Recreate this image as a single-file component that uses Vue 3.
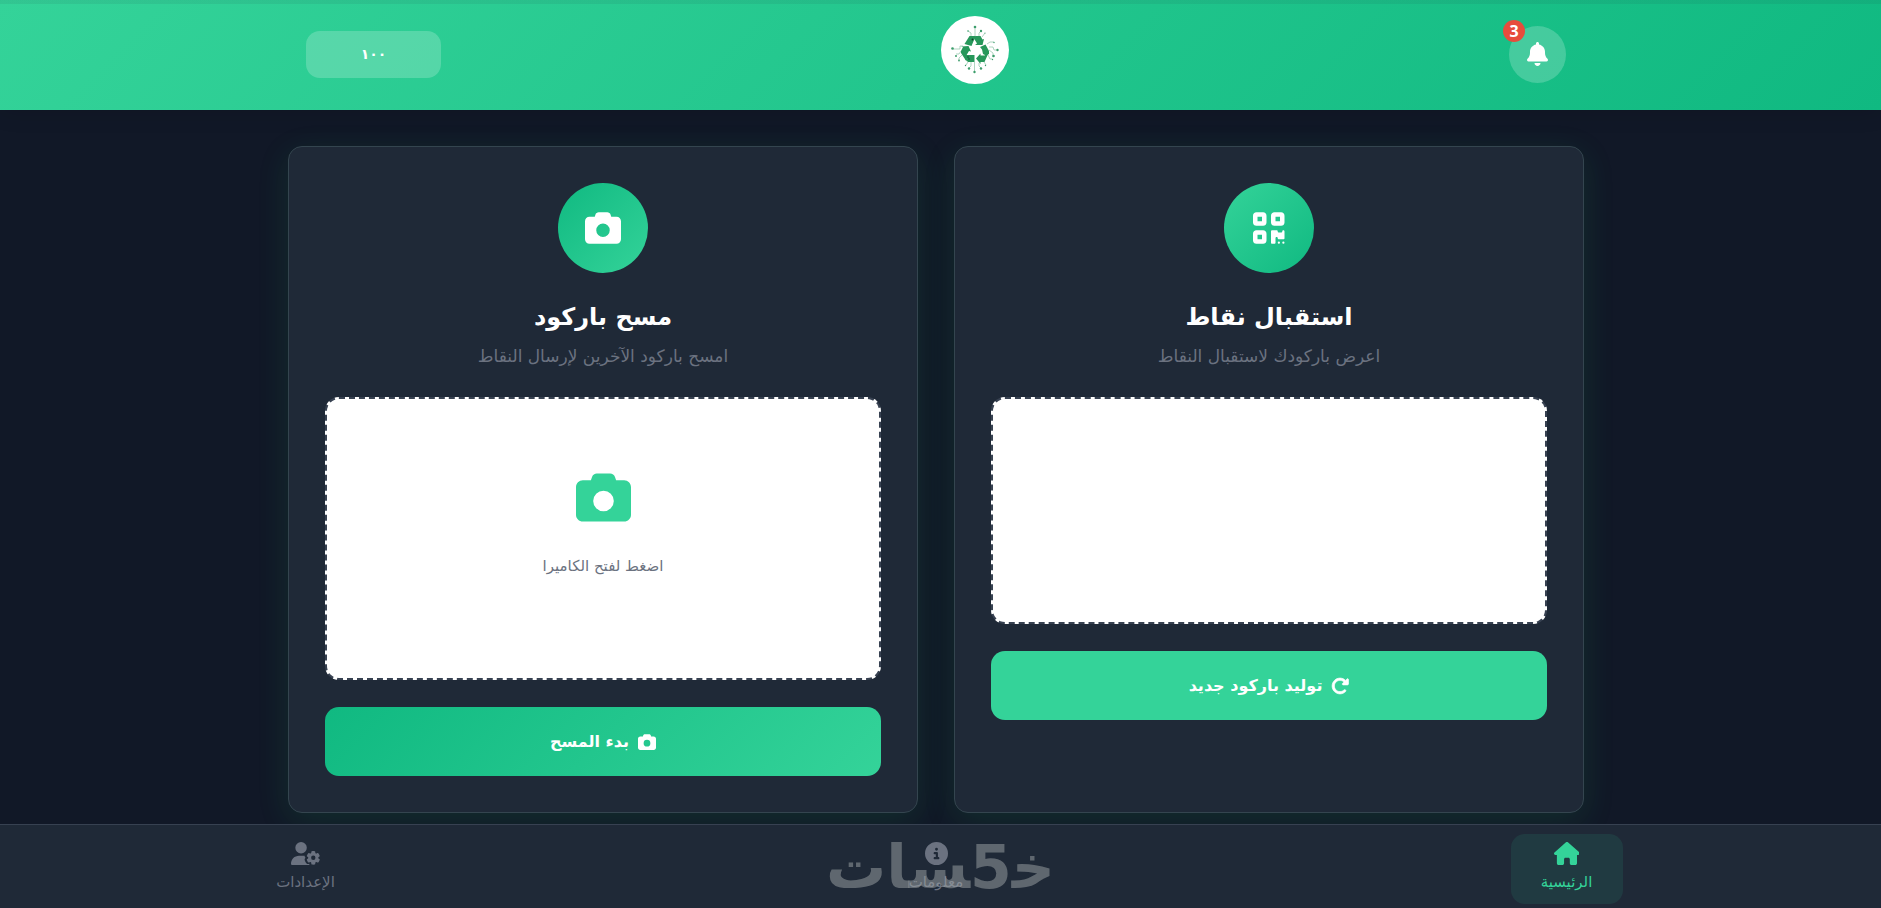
<script setup>
import { ref } from 'vue';

const points = ref('١٠٠');
const notifications = ref(3);
const activeTab = ref('home');

const CAMERA = 'M149.1 64.8L138.7 96H64C28.7 96 0 124.7 0 160V416c0 35.3 28.7 64 64 64H448c35.3 0 64-28.7 64-64V160c0-35.3-28.7-64-64-64H373.3L362.9 64.8C356.4 45.2 338.1 32 317.4 32H194.6c-20.7 0-39 13.2-45.5 32.8zM256 192a96 96 0 1 1 0 192 96 96 0 1 1 0-192z';

const tabs = [
  {
    id: 'home',
    label: 'الرئيسية',
    viewBox: '0 0 576 512',
    paths: ['M575.8 255.5c0 18-15 32.1-32 32.1h-32l.7 160.2c0 2.7-.2 5.4-.5 8.1V472c0 22.1-17.9 40-40 40H456c-1.1 0-2.2 0-3.3-.1c-1.4 .1-2.8 .1-4.2 .1H416 392c-22.1 0-40-17.9-40-40V448 384c0-17.7-14.3-32-32-32H256c-17.7 0-32 14.3-32 32v64 24c0 22.1-17.9 40-40 40H160 128.1c-1.5 0-3-.1-4.5-.2c-1.2 .1-2.4 .2-3.6 .2H104c-22.1 0-40-17.9-40-40V360c0-.9 0-1.9 .1-2.8V287.6H32c-18 0-32-14-32-32.1c0-9 3-17 10-24L266.4 8c7-7 15-8 22-8s15 2 21 7L564.8 231.5c8 7 12 15 11 24z'],
  },
  {
    id: 'info',
    label: 'معلومات',
    viewBox: '0 0 512 512',
    paths: ['M256 512A256 256 0 1 0 256 0a256 256 0 1 0 0 512zM216 336h24V272H216c-13.3 0-24-10.7-24-24s10.7-24 24-24h48c13.3 0 24 10.7 24 24v88h8c13.3 0 24 10.7 24 24s-10.7 24-24 24H216c-13.3 0-24-10.7-24-24s10.7-24 24-24zm40-208a32 32 0 1 1 0 64 32 32 0 1 1 0-64z'],
  },
  {
    id: 'settings',
    label: 'الإعدادات',
    viewBox: '0 0 640 512',
    paths: [
      'M224 0a128 128 0 1 1 0 256A128 128 0 1 1 224 0zM178.3 304h91.4c11.8 0 23.4 1.2 34.5 3.3c-2.1 18.5 7.4 35.6 21.8 44.8c-16.6 10.6-26.7 31.6-20 53.3c4 12.9 9.4 25.5 16.4 37.6s15.2 23.1 24.4 33c15.7 16.9 39.6 18.4 57.2 8.7v.9c0 9.2 2.7 18.5 7.9 26.3H29.7C13.3 512 0 498.7 0 482.3C0 383.8 79.8 304 178.3 304z',
      'M452 218.2c0-7 4.5-13.3 11.3-14.8c10.5-2.4 21.5-3.7 32.7-3.7s22.2 1.3 32.7 3.7c6.8 1.5 11.3 7.8 11.3 14.8v17.7c0 7.8 4.8 14.8 11.6 18.7c6.8 3.9 15.1 4.5 21.8 .6l13.8-7.9c6.1-3.5 13.7-2.7 18.5 2.4c7.6 8.1 14.3 17.2 20.1 27.2s10.3 20.4 13.5 31c2.1 6.7-1.1 13.7-7.2 17.2l-14.4 8.3c-6.5 3.7-10 10.9-10 18.4s3.5 14.7 10 18.4l14.4 8.3c6.1 3.5 9.2 10.5 7.2 17.2c-3.3 10.6-7.8 21-13.5 31s-12.5 19.1-20.1 27.2c-4.8 5.1-12.5 5.9-18.5 2.4l-13.8-7.9c-6.7-3.9-15.1-3.3-21.8 .6c-6.8 3.9-11.6 10.9-11.6 18.7v17.7c0 7-4.5 13.3-11.3 14.8c-10.5 2.4-21.5 3.7-32.7 3.7s-22.2-1.3-32.7-3.7c-6.8-1.5-11.3-7.8-11.3-14.8V467.8c0-7.9-4.9-14.9-11.7-18.9c-6.8-3.9-15.2-4.5-22-.6l-13.5 7.8c-6.1 3.5-13.7 2.7-18.5-2.4c-7.6-8.1-14.3-17.2-20.1-27.2s-10.3-20.4-13.5-31c-2.1-6.7 1.1-13.7 7.2-17.2l14-8.1c6.5-3.8 10.1-11.1 10.1-18.6s-3.5-14.8-10.1-18.6l-14-8.1c-6.1-3.5-9.2-10.5-7.2-17.2c3.3-10.6 7.7-21 13.5-31s12.5-19.1 20.1-27.2c4.8-5.1 12.4-5.9 18.5-2.4l13.6 7.8c6.8 3.9 15.2 3.3 22-.6c6.9-3.9 11.7-11 11.7-18.9V218.2zm92.1 133.5a48.1 48.1 0 1 0 -96.1 0 48.1 48.1 0 1 0 96.1 0z',
    ],
  },
];

// circuit traces round the recycling mark: path + end node [x, y, r]
const traces = [
  { d: 'M34 20V11', node: [34, 11, 1.3] },
  { d: 'M38 20V17L40 15', node: [40, 15, 1.2] },
  { d: 'M30 20V17L27 15', node: [27, 15, 0.8] },
  { d: 'M41 21L44 17', node: [44, 17, 0.6] },
  { d: 'M22 30H19V33H12', node: [11.5, 32.5, 1.3] },
  { d: 'M20 35L18 38H15', node: [15, 40, 1] },
  { d: 'M21 39L18 42V44', node: [18, 44.5, 0.9] },
  { d: 'M46 28L49 26H53', node: [53, 26.5, 0.7] },
  { d: 'M48 31H52L53 34H56', node: [56.5, 34, 1.2] },
  { d: 'M48 34L52 37V39', node: [52.5, 40, 1.3] },
  { d: 'M47 39L49 43H51', node: [51.5, 43.5, 0.7] },
  { d: 'M43 46L45 49', node: [44.5, 49.5, 0.7] },
  { d: 'M38 47V50L40 52', node: [40, 52.5, 1.2] },
  { d: 'M33.5 46V56', node: [33.5, 56, 1.2] },
  { d: 'M30 46V50L28 52', node: [28, 52.5, 1.2] },
  { d: 'M27 46L25 49', node: [24.5, 49.5, 0.7] },
];
</script>

<template>
  <div class="page" dir="rtl" lang="ar">
    <header class="header">
      <div class="header-content">
        <button class="bell" type="button" aria-label="الإشعارات">
          <svg viewBox="0 0 448 512" class="bell-icon">
            <path d="M224 0c-17.7 0-32 14.3-32 32V51.2C119 66 64 130.6 64 208v18.8c0 47-17.3 92.4-48.5 127.6l-7.4 8.3c-8.4 9.4-10.4 22.9-5.3 34.4S19.4 416 32 416H416c12.6 0 24-7.4 29.2-18.9s3.1-25-5.3-34.4l-7.4-8.3C401.3 319.2 384 273.9 384 226.8V208c0-77.4-55-142-128-156.8V32c0-17.7-14.3-32-32-32zm45.3 493.3c12-12 18.7-28.3 18.7-45.3H224 160c0 17 6.7 33.3 18.7 45.3s28.3 18.7 45.3 18.7s33.3-6.7 45.3-18.7z" />
          </svg>
          <span class="badge">{{ notifications }}</span>
        </button>

        <svg class="logo" viewBox="0 0 68 68">
          <circle cx="34" cy="34" r="34" fill="#fff" />
          <g fill="none" stroke="#8cc3a6" stroke-width="0.7">
            <path v-for="(t, i) in traces" :key="i" :d="t.d" />
          </g>
          <g fill="#3c9d6b">
            <circle v-for="(t, i) in traces" :key="i" :cx="t.node[0]" :cy="t.node[1]" :r="t.node[2]" />
          </g>
          <g fill="#27975a">
            <path d="M23.5 28L28.5 20H35L33 24L30.500 30Z" />
            <path d="M34.5 20H39.5L41.5 23.5L43 23L41.5 29H34L36 27.5L33 22.5Z" />
            <path d="M20 35L22 31L20 30.5L27.5 30L30 35.5L28 35L25 40L25.5 45.5L20 37Z" />
            <path d="M25 39H33.5V46H27L24 43Z" />
            <path d="M35 42.5L39.5 37.5V39.5H43.5L47.5 37L43.5 46H39.5V48Z" />
            <path d="M39 31L44.5 28.5L48 35V38L45 39.5L42 38L41 33.5Z" />
          </g>
          <g fill="#123c2c">
            <circle cx="31.5" cy="23.5" r="0.9" />
            <circle cx="27" cy="41" r="0.7" />
            <circle cx="28" cy="43" r="0.7" />
          </g>
        </svg>

        <div class="points">{{ points }}</div>
      </div>
    </header>

    <main class="main">
      <section class="card">
        <div class="card-icon">
          <svg viewBox="0 0 448 512" class="icon-lg">
            <path d="M0 80C0 53.5 21.5 32 48 32h96c26.5 0 48 21.5 48 48v96c0 26.5-21.5 48-48 48H48c-26.5 0-48-21.5-48-48V80zM64 96v64h64V96H64zM0 336c0-26.5 21.5-48 48-48h96c26.5 0 48 21.5 48 48v96c0 26.5-21.5 48-48 48H48c-26.5 0-48-21.5-48-48V336zm64 16v64h64V352H64zM304 32h96c26.5 0 48 21.5 48 48v96c0 26.5-21.5 48-48 48H304c-26.5 0-48-21.5-48-48V80c0-26.5 21.5-48 48-48zm80 64H320v64h64V96zM256 304c0-8.8 7.2-16 16-16h64c8.8 0 16 7.2 16 16s7.2 16 16 16h32c8.8 0 16-7.2 16-16s7.2-16 16-16s16 7.2 16 16v96c0 8.8-7.2 16-16 16H368c-8.8 0-16-7.2-16-16s-7.2-16-16-16s-16 7.2-16 16v64c0 8.8-7.2 16-16 16H272c-8.8 0-16-7.2-16-16V304zM368 480a16 16 0 1 1 0-32 16 16 0 1 1 0 32zm64 0a16 16 0 1 1 0-32 16 16 0 1 1 0 32z" />
          </svg>
        </div>
        <h2 class="card-title">استقبال نقاط</h2>
        <p class="card-text">اعرض باركودك لاستقبال النقاط</p>
        <div class="code-box"></div>
        <button class="btn btn-solid" type="button">
          <svg viewBox="0 0 512 512" class="icon-sm icon-redo">
            <path d="M463.5 224H472c13.3 0 24-10.7 24-24V72c0-9.7-5.8-18.5-14.8-22.2s-19.3-1.7-26.2 5.2L413.4 96.6c-87.6-86.5-228.7-86.2-315.8 1c-87.5 87.5-87.5 229.3 0 316.8s229.3 87.5 316.8 0c12.5-12.5 12.5-32.8 0-45.3s-32.8-12.5-45.3 0c-62.5 62.5-163.8 62.5-226.3 0s-62.5-163.8 0-226.3c62.2-62.2 162.7-62.5 225.3-1L327 183c-6.9 6.9-8.9 17.2-5.2 26.2s12.5 14.8 22.2 14.8H463.5z" />
          </svg>
          توليد باركود جديد
        </button>
      </section>

      <section class="card">
        <div class="card-icon reverse">
          <svg viewBox="0 0 512 512" class="icon-lg"><path :d="CAMERA" /></svg>
        </div>
        <h2 class="card-title">مسح باركود</h2>
        <p class="card-text">امسح باركود الآخرين لإرسال النقاط</p>
        <button class="code-box scanner" type="button">
          <svg viewBox="0 0 512 512" class="icon-xl"><path :d="CAMERA" /></svg>
          <span>اضغط لفتح الكاميرا</span>
        </button>
        <button class="btn btn-gradient" type="button">
          <svg viewBox="0 0 512 512" class="icon-sm"><path :d="CAMERA" /></svg>
          بدء المسح
        </button>
      </section>
    </main>

    <nav class="nav">
      <div class="nav-content">
        <a v-for="tab in tabs" :key="tab.id" href="#" :class="['nav-item', activeTab === tab.id ? 'active' : '']"
          @click.prevent="activeTab = tab.id">
          <svg :viewBox="tab.viewBox" class="nav-icon">
            <path v-for="(d, i) in tab.paths" :key="i" :d="d" />
          </svg>
          <span>{{ tab.label }}</span>
        </a>
      </div>
      <div class="watermark"><span>خ&zwj;</span><span>5</span><span>&zwj;سات</span></div>
    </nav>
  </div>
</template>

<style>
body {
  margin: 0;
  background: #111827;
}
</style>

<style scoped>
.page {
  min-height: 100vh;
  display: grid;
  grid-template-rows: auto 1fr auto;
  background: #111827;
  color: #fff;
  font-family: "DejaVu Sans", sans-serif;
}

.page * {
  box-sizing: border-box;
}

svg {
  display: block;
  fill: currentColor;
}

button {
  font-family: inherit;
  border: none;
  cursor: pointer;
}

.header {
  padding: 16px 9px 17px 0;
  background: linear-gradient(to bottom, rgba(31, 41, 55, 0.08) 4px, transparent 4px),
    linear-gradient(135deg, #34d399 0%, #10b981 100%);
  box-shadow: 0 4px 20px rgba(0, 0, 0, 0.1);
}

.header-content {
  max-width: 1260px;
  margin: 0 auto;
  display: flex;
  align-items: center;
  justify-content: space-between;
}

.bell {
  position: relative;
  width: 57px;
  height: 57px;
  padding: 0 0 2px;
  border-radius: 50%;
  background: rgba(255, 255, 255, 0.2);
  color: #fff;
  display: flex;
  align-items: center;
  justify-content: center;
}

.bell-icon {
  height: 24px;
}

.badge {
  position: absolute;
  top: -6px;
  left: -6px;
  width: 22px;
  height: 22px;
  border-radius: 50%;
  background: #e74c3c;
  font: bold 16px/22px "Open Sans", sans-serif;
  text-align: center;
}

.logo {
  width: 68px;
  height: 68px;
  margin-bottom: 9px;
}

.points {
  width: 135px;
  height: 47px;
  border-radius: 14px;
  background: rgba(255, 255, 255, 0.2);
  font-size: 14px;
  font-weight: bold;
  line-height: 47px;
  text-align: center;
}

.main {
  width: 100%;
  max-width: 1305px;
  margin: 0 auto;
  padding: 36px 9px 11px 0;
  box-sizing: border-box;
  display: grid;
  grid-template-columns: 1fr 1fr;
  gap: 36px;
}

.card {
  padding: 36px;
  border: 1px solid #34454f;
  border-radius: 14px;
  background: #1f2937;
  box-shadow: 0 8px 32px rgba(34, 197, 94, 0.13);
  text-align: center;
}

.card-icon {
  width: 90px;
  height: 90px;
  margin: 0 auto 22px;
  border-radius: 50%;
  background: linear-gradient(135deg, #34d399 0%, #10b981 100%);
  display: flex;
  align-items: center;
  justify-content: center;
}

.card-icon.reverse {
  background: linear-gradient(135deg, #10b981 0%, #34d399 100%);
}

.icon-lg {
  height: 36px;
}

.icon-xl {
  height: 55px;
  color: #34d399;
}

.icon-sm {
  height: 18px;
}

.icon-redo {
  stroke: currentColor;
  stroke-width: 20;
}

.card-title {
  margin: 0 0 3px;
  font-size: 24px;
  line-height: 44px;
}

.card-text {
  margin: 0 0 27px;
  color: #6b7280;
  font-size: 17px;
  line-height: 28px;
}

.code-box {
  width: 100%;
  min-height: 227px;
  margin-bottom: 27px;
  border: 2px dashed #374151;
  border-radius: 14px;
  background: #fff;
}

.scanner {
  min-height: 283px;
  padding: 0 0 28px;
  display: flex;
  flex-direction: column;
  align-items: center;
  justify-content: center;
  gap: 28px;
  color: #6b7280;
  font-size: 15px;
  line-height: 26px;
}

.btn {
  width: 100%;
  height: 69px;
  border-radius: 14px;
  color: #fff;
  font-size: 16px;
  font-weight: bold;
  display: flex;
  align-items: center;
  justify-content: center;
  gap: 9px;
}

.btn-solid {
  background: #34d399;
}

.btn-gradient {
  background: linear-gradient(135deg, #10b981 0%, #34d399 100%);
}

.nav {
  position: relative;
  padding: 9px 9px 4px 0;
  border-top: 1px solid #374151;
  background: #1f2937;
}

.nav-content {
  max-width: 1373px;
  margin: 0 auto;
  display: flex;
  justify-content: space-between;
}

.nav-item {
  width: 112px;
  height: 70px;
  padding-top: 8px;
  border-radius: 14px;
  color: #6b7280;
  font-size: 15px;
  line-height: 22px;
  text-decoration: none;
  display: flex;
  flex-direction: column;
  align-items: center;
  gap: 6px;
}

.nav-item.active {
  background: rgba(52, 211, 153, 0.1);
  color: #34d399;
}

.nav-icon {
  height: 23px;
}

.watermark {
  position: absolute;
  inset: 0;
  display: flex;
  align-items: center;
  justify-content: center;
  color: rgba(160, 166, 168, 0.5);
  font-size: 60px;
  font-weight: bold;
  line-height: 60px;
  pointer-events: none;
}
</style>
